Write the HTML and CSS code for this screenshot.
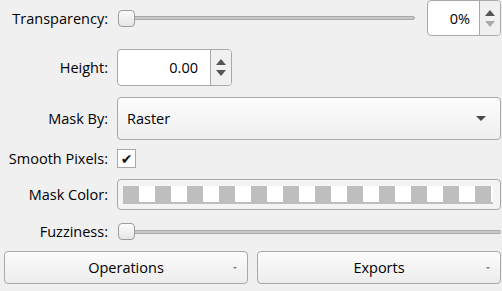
FILE: index.html
```html
<!DOCTYPE html>
<html>
<head>
<meta charset="utf-8">
<link rel="stylesheet" href="styles.css">
</head>
<body>
<div class="panel">
  <div class="row row-transp">
    <span class="label">Transparency:</span>
    <div class="slider"><div class="track"></div><div class="handle"></div></div>
    <div class="spin spin-pct">
      <div class="spin-value">0%</div>
      <div class="spin-arrows"><span class="up"></span><span class="down dis"></span></div>
    </div>
  </div>
  <div class="row row-height">
    <span class="label">Height:</span>
    <div class="spin spin-height">
      <div class="spin-value">0.00</div>
      <div class="spin-arrows"><span class="up"></span><span class="down"></span></div>
    </div>
  </div>
  <div class="row row-mask">
    <span class="label">Mask By:</span>
    <div class="combo"><span>Raster</span><span class="combo-arrow"></span></div>
  </div>
  <div class="row row-smooth">
    <span class="label">Smooth Pixels:</span>
    <div class="check">✔</div>
  </div>
  <div class="row row-color">
    <span class="label">Mask Color:</span>
    <div class="color-box"><div class="checker"></div></div>
  </div>
  <div class="row row-fuzz">
    <span class="label">Fuzziness:</span>
    <div class="slider"><div class="track"></div><div class="handle"></div></div>
  </div>
  <div class="row row-buttons">
    <div class="btn"><span>Operations</span><span class="btn-arrow"></span></div>
    <div class="btn"><span>Exports</span><span class="btn-arrow"></span></div>
  </div>
</div>
</body>
</html>
```
FILE: styles.css
```css
html, body { margin: 0; padding: 0; background: #f0f0f0; }
body { width: 502px; height: 291px; overflow: hidden; font-family: "Open Sans", "Noto Sans", sans-serif; font-size: 14.5px; color: #000; }
.panel { display: flex; flex-direction: column; padding: 0 1px 0 0; }
.row { display: flex; align-items: center; }
.label { width: 108px; flex: none; text-align: right; margin-right: 9px; white-space: nowrap; }
.row-transp { height: 36px; }
.row-height { height: 37px; margin-top: 13px; }
.row-mask { height: 43px; margin-top: 11px; }
.row-smooth { height: 19px; margin-top: 9px; }
.row-color { height: 31px; margin-top: 11px; }
.row-fuzz { height: 17px; margin-top: 13px; }
.row-buttons { height: 33px; margin-top: 11px; padding-left: 4px; gap: 9px; }

.slider { position: relative; flex: 1; height: 17px; display: flex; align-items: center; }
.row-transp .slider { margin-right: 12px; }
.track { flex: 1; height: 2px; border: 1px solid #a9a9a9; background: #c8c8c8; border-radius: 2px; margin-left: 2px; }
.handle { position: absolute; left: 1px; top: 0; width: 15px; height: 15px; border: 1px solid #9c9c9c; border-radius: 4px; background: linear-gradient(#fbfbfb, #e6e6e6); }

.spin { display: flex; height: 100%; box-sizing: border-box; border: 1px solid #a8a8a8; border-radius: 4px; background: #fff; overflow: hidden; }
.spin-pct { width: 74px; }
.spin-height { width: 115px; }
.spin-value { flex: 1; display: flex; align-items: center; justify-content: flex-end; padding-right: 12px; border-right: 1px solid #a8a8a8; }
.spin-pct .spin-value { padding-right: 9px; }
.spin-arrows { width: 20px; background: #f0f0f0; display: flex; flex-direction: column; align-items: center; justify-content: center; gap: 5px; }
.up { width: 0; height: 0; border-left: 5px solid transparent; border-right: 5px solid transparent; border-bottom: 6px solid #555; }
.down { width: 0; height: 0; border-left: 5px solid transparent; border-right: 5px solid transparent; border-top: 6px solid #555; }
.down.dis { border-top-color: #aaa; }

.combo { flex: 1; height: 100%; box-sizing: border-box; border: 1px solid #a8a8a8; border-radius: 4px; background: linear-gradient(#fdfdfd, #efefef); display: flex; align-items: center; justify-content: space-between; padding: 0 14px 0 9px; }
.combo-arrow { width: 0; height: 0; border-left: 5px solid transparent; border-right: 5px solid transparent; border-top: 5px solid #4a4a4a; }

.check { width: 19px; height: 19px; box-sizing: border-box; border: 1px solid #a8a8a8; background: #fff; display: flex; align-items: center; justify-content: center; font-family: "DejaVu Sans", sans-serif; font-size: 14px; line-height: 1; color: #111; }

.color-box { flex: 1; height: 100%; box-sizing: border-box; border: 1px solid #a8a8a8; border-radius: 4px; background: #f4f4f4; padding: 6px 7px 5px 5px; }
.checker { height: 100%; background:
  linear-gradient(#bebebe, #bebebe) bottom left / 100% 2px no-repeat,
  repeating-linear-gradient(90deg, #bebebe 0 16px, #fff 16px 32px); }

.btn { flex: 1; height: 100%; box-sizing: border-box; border: 1px solid #a8a8a8; border-radius: 4px; background: linear-gradient(#fcfcfc, #ececec); display: flex; align-items: center; justify-content: center; position: relative; }
.btn-arrow { position: absolute; right: 10px; top: 15px; width: 0; height: 0; border-left: 2px solid transparent; border-right: 2px solid transparent; border-top: 2px solid #777; }
```
